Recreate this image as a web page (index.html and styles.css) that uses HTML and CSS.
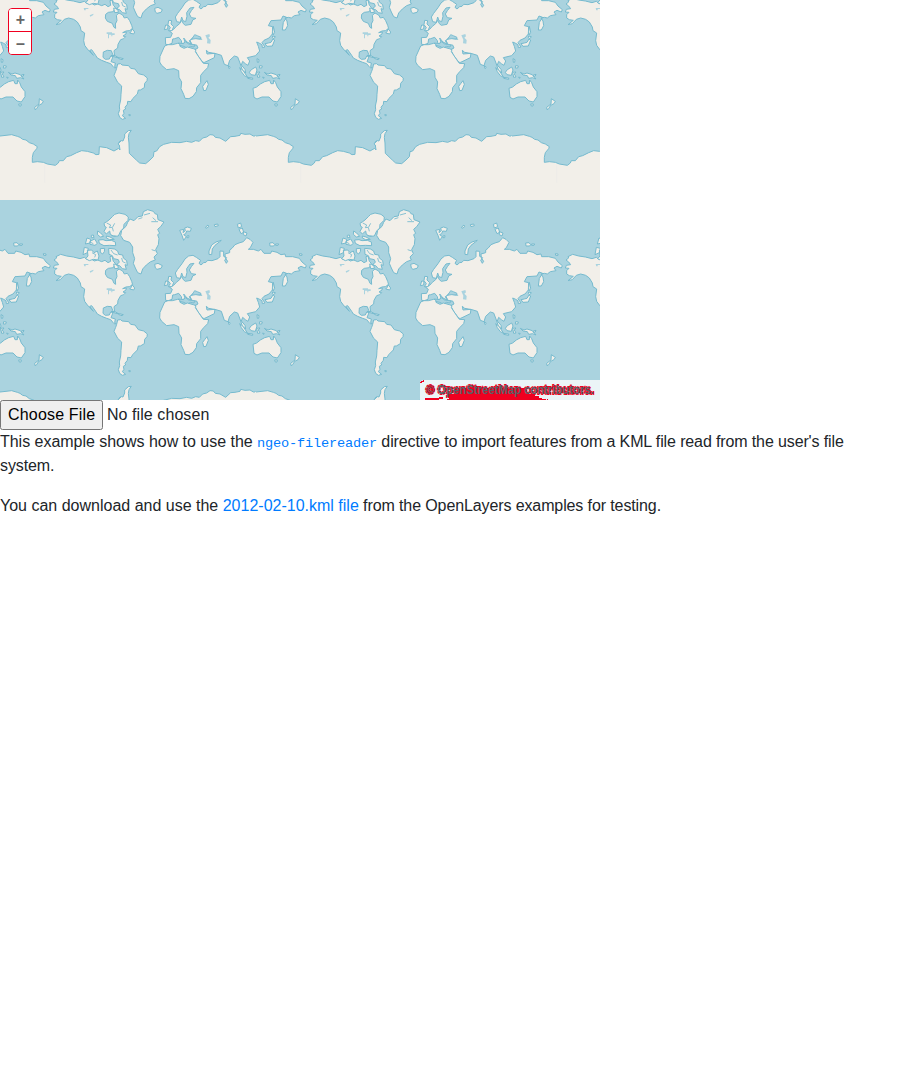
FILE: index.html
```html
<!DOCTYPE html>
<html lang="en">
<head>
<meta charset="utf-8">
<title>File reader example</title>
<link rel="stylesheet" href="styles.css">
</head>
<body>
<div class="map">
  <svg class="tiles" width="600" height="400" viewBox="0 0 600 400">
    <defs>
      <g id="world">
        <!-- Antarctica: ice without an outline, then its coast -->
        <path class="icefield" d="M-153 576L-132 574 -115 572 -98 577 -90 580 -82 586 -72 588 -62 596 -50 600 -38 608 -40 614 -50 626 -53 640 -53 655 -38 653 -20 655 -8 660 16 664 25 657 28 650 40 650 50 638 62 635 80 626 95 620 112 622 130 627 138 632 147 631 148 608 170 611 192 621 206 613 210 618 208 603 204 600 212 590 207 596 214 590 219 591 224 579 224 570 235 560 244 559 237 569 235 580 237 597 238 628 260 649 269 657 287 659 300 648 310 638 312 623 320 621 329 608 341 601 365 595 390 596 410 592 425 595 437 590 448 592 458 582 470 579 480 572 490 573 496 580 510 582 527 592 542 578 555 577 570 574 572 568 585 571 600 570 610 576 621 576V768H-153Z"/>
        <path class="coast" d="M-150 576L-132 574 -115 572 -98 577 -90 580 -82 586 -72 588 -62 596 -50 600 -38 608 -40 614 -50 626 -53 640 -53 655 -38 653 -20 655 -8 660 16 664 25 657 28 650 40 650 50 638 62 635 80 626 95 620 112 622 130 627 138 632 147 631 148 608 170 611 192 621 206 613 210 618 208 603 204 600 212 590 207 596 214 590 219 591 224 579 224 570 235 560 244 559 237 569 235 580 237 597 238 628 260 649 269 657 287 659 300 648 310 638 312 623 320 621 329 608 341 601 365 595 390 596 410 592 425 595 437 590 448 592 458 582 470 579 480 572 490 573 496 580 510 582 527 592 542 578 555 577 570 574 572 568 585 571 600 570 610 576 618 576"/>
        <path d="M-16 664V716" stroke="#e3e5e3" fill="none"/>
        <!-- North America -->
        <path class="land" d="M12 180L20 174 18 170 32 163 50 168 70 171 90 176 103 172 110 178 122 176 133 183 143 180 155 185 165 181 174 188 182 184 180 170 186 168 190 184 196 190 190 203 175 205 167 211 166 222 172 232 187 238 192 250 197 253 196 240 201 230 199 214 207 207 218 213 223 222 232 220 239 230 245 244 248 254 238 260 228 261 218 266 229 264 228 270 219 276 227 278 221 284 212 287 204 301 203 312 192 320 194 337 188 331 184 320 172 319 160 324 159 340 166 346 178 345 182 336 189 338 183 353 196 357 194 368 200 372 192 371 182 359 170 355 155 349 142 342 137 334 125 317 119 319 130 334 112 315 104 304 101 290 104 267 93 260 91 249 82 234 71 226 56 222 43 226 31 239 18 242 34 229 22 227 14 222 14 212 21 205 10 204 13 196 26 194 20 186Z"/>
        <!-- Arctic archipelago -->
        <path class="land" d="M112 151L125 150 132 158 142 153 147 168 144 180 130 178 118 182 107 176 114 168ZM103 142L115 145 112 158 99 164ZM111 114L122 118 120 129 106 132ZM124 106L130 105 132 113 124 113ZM143 93L152 99 161 109 151 111 142 103ZM120 124L134 117 142 130 135 136 120 133ZM146 120L159 119 168 122 184 121 196 126 197 137 178 136 162 137 148 130ZM162 70L170 65 177 60 187 50 194 43 207 39 225 43 235 51 234 61 222 73 221 84 212 93 205 108 191 109 181 103 179 93 169 102 162 94 169 82 164 79ZM169 108L180 111 193 118 179 119 169 114ZM151 146L164 145 163 155 158 162 151 157ZM176 145L193 147 203 153 206 163 218 165 220 174 230 182 232 196 225 194 229 208 217 206 209 197 198 195 208 187 205 179 191 176 187 167 177 163ZM191 192L203 194 205 205 194 206ZM246 254L254 264 251 270 239 267 243 263Z"/>
        <path class="water" d="M170 69L182 75 178 83 187 82 190 94M194 70L188 81M184 107L197 108M126 158L137 164 134 172M120 126L130 131M183 150L191 161 203 165M215 174L218 185 227 189"/>
        <!-- Greenland and Iceland -->
        <path class="land" d="M212 107L215 91 228 79 233 67 240 57 252 62 264 50 277 48 280 35 293 29 310 34 316 42 322 43 324 59 342 66 332 80 323 88 329 100 323 104 327 116 325 134 317 149 322 161 312 171 316 180 302 185 289 195 278 207 273 222 263 218 256 204 250 190 254 176 248 158 248 141 239 127 221 121ZM314 193L324 190 337 197 333 205 321 208 316 204Z"/>
        <path class="water" d="M265 57L277 53M282 45L300 40M308 53L318 62M304 65L324 65M305 149L317 153"/>
        <!-- Cuba and Hispaniola -->
        <path class="land" d="M183 334L195 335 207 342 195 339ZM208 341L220 344 216 347 207 344Z"/>
        <!-- South America -->
        <path class="land" d="M200 373L203 360 212 359 216 363 236 365 242 373 255 375 265 389 281 393 292 402 291 410 284 418 283 431 271 438 265 438 262 450 248 464 243 473 233 472 232 481 225 490 227 495 220 499 222 508 217 515 227 523 217 526 209 520 205 509 209 497 208 486 212 468 213 451 215 426 203 415 192 394 197 382Z"/>
        <path class="land" d="M236 512h5v3h-4z"/>
        <!-- Europe and Asia -->
        <path class="land" d="M347 301L346 281 362 280 367 268 359 262 371 256 379 247 389 239 395 229 400 239 406 244 423 241 428 228 438 223 424 221 418 210 424 200 432 190 420 192 410 206 411 217 407 233 399 230 395 219 391 235 380 233 376 219 383 208 396 191 405 177 416 168 429 166 439 172 452 181 447 190 453 195 461 188 468 187 473 181 486 182 504 176 510 170 510 153 521 154 521 169 530 173 524 181 529 190 533 184 526 174 525 162 539 158 539 150 546 145 555 134 567 129 580 125 590 113 600 118 609 127 601 143 595 148 610 148 625 153 633 148 642 160 662 160 665 153 681 157 693 164 705 162 707 170 728 170 748 175 756 186 769 197 766 204 753 199 744 204 750 212 733 215 724 222 715 220 705 222 711 231 713 245 706 258 697 258 700 235 710 220 699 216 693 228 663 230 655 245 668 248 667 270 657 282 642 289 636 296 645 309 637 311 636 302 629 298 620 294 625 307 629 321 617 335 600 339 592 341 599 351 594 364 586 359 578 352 574 363 585 376 587 387 577 378 570 357 563 339 553 336 539 349 534 365 523 361 514 334 498 329 476 325 469 319 471 330 495 328 493 341 464 355 459 355 444 336 434 317 444 312 440 303 427 302 420 290 429 280 442 284 455 286 448 279 433 277 425 286 418 290 423 300 411 294 401 282 405 295 396 300 394 290 386 280 374 284 368 285 366 298 355 302Z"/>
        <path class="water sea" d="M425 286L434 272 442 275 453 280 450 285 436 284ZM384 297L401 299 406 293 416 300 435 303 432 309 421 307 412 313 402 307 389 304Z"/>
        <!-- Africa and Madagascar -->
        <path class="land" d="M344 306L354 302 367 302 383 298 389 299 390 307 402 313 412 309 430 314 438 317 436 323 452 347 460 358 476 359 473 371 461 383 452 394 452 416 440 431 439 443 429 457 417 464 405 463 401 451 393 434 395 414 387 400 386 380 372 374 350 377 335 364 329 354 330 337ZM471 410L475 421 468 439 461 440 458 427 464 419Z"/>
        <!-- European and Arctic islands -->
        <path class="land" d="M356 229L365 230 363 240 371 248 366 260 355 260 361 251 354 242ZM347 243L354 244 353 255 343 257ZM389 91L401 88 399 98 406 92 404 84 413 81 424 85 421 94 410 93 407 101 401 104 409 110 401 121 396 106ZM411 108L417 107 416 113 411 113ZM466 82L474 75 476 80 468 85ZM493 74L503 72 505 77 495 80ZM514 121L508 126 495 136 487 147 485 164 477 163 477 153 485 135 498 126ZM562 73L572 69 575 80 565 84ZM567 88L577 84 581 97 573 101ZM580 95L591 99 588 108 580 104ZM659 129L669 128 674 134 671 138 660 138ZM677 132L686 132 684 136 677 136ZM748 161L756 162 756 166 749 166ZM670 247L674 265 669 273 668 262ZM668 276L676 278 672 284 667 281ZM669 285L674 288 667 306 651 307 645 299 655 297 663 295Z"/>
        <!-- South-east Asia and Oceania -->
        <path class="land" d="M569 371L579 379 593 400 583 395 574 383ZM592 400L608 402 608 406 593 403ZM604 377L617 369 621 378 616 394 603 392 598 385ZM621 344L627 347 626 355 622 355ZM629 365L637 366 635 372 628 372ZM620 385L630 384 625 390 630 399 623 400ZM643 385L654 390 663 387 679 392 690 405 680 401 668 403 664 395 651 393ZM682 393L690 391 688 396 682 397ZM638 399L643 401 640 403ZM535 365L541 370 537 374ZM609 433L620 429 631 420 644 413 659 409 663 419 670 419 671 408 677 416 682 429 693 443 693 458 682 474 669 471 657 459 636 459 621 465 612 460ZM674 480L682 480 681 486 676 486ZM736 464L748 472 744 479 734 484 728 494 723 497 722 490 735 480Z"/>
        <!-- Inland seas and lakes -->
        <path class="lake" d="M466 274L478 270 480 277 475 281 482 288 481 299 471 298 472 287ZM170 265h16v3h8v5h-7v4h-3v-5h-7v11h-3v-13h-4zM101 192h14v3h-8v4h-4zM119 214l11-5v4l-9 5z"/>
      </g>
      <g id="row">
        <use href="#world" x="-768"/><use href="#world"/><use href="#world" x="768"/>
      </g>
    </defs>
    <g transform="translate(50 200) scale(.333333)">
      <use href="#row" y="-768"/>
      <use href="#row"/>
      <use href="#world" x="1536" y="-768"/>
      <use href="#world" x="1536"/>
    </g>
  </svg>
  <div class="zoom">
    <button class="zoom-in" aria-label="Zoom in">+</button>
    <button class="zoom-out" aria-label="Zoom out">–</button>
  </div>
  <div class="attribution">
    <svg width="180" height="20" viewBox="0 0 180 20">
      <path class="mark" d="M0 2h1v-1h2v-1h1v2h-2v1h-2zM5 18h14v-1h4v2h-4v1h-14zM27 14h8v-6h70v6h10v2h4v2h3v1h4v1h-99v-1h2v-2h-3zM127 19h1v1h-1z"/>
      <text class="credit" x="6" y="14" textLength="168" lengthAdjust="spacingAndGlyphs">© OpenStreetMap contributors.</text>
    </svg>
  </div>
</div>
<input class="file" type="file">
<p><span class="lead">This example shows how to use the </span><a href="#"><code>ngeo-filereader</code></a><span class="tight"> directive to import features from a KML file read from the user's file system.</span></p>
<p>You can download and use the <a href="#">2012-02-10.kml file</a><span class="snug"> from the OpenLayers examples for testing.</span></p>
</body>
</html>
```
FILE: styles.css
```css
body {
  margin: 0;
  background: #fff;
  color: #212529;
  font: 16px/24px "Liberation Sans", Arial, sans-serif;
}

.map {
  position: relative;
  width: 600px;
  height: 400px;
  overflow: hidden;
  background: #aad3df;
}

.tiles {
  display: block;
}

.land,
.coast {
  fill: #f2efe9;
  stroke: #75bace;
  stroke-width: 3;
  stroke-linejoin: round;
}

.coast {
  fill: none;
}

.icefield {
  fill: #f2efe9;
}

.water {
  fill: none;
  stroke: #75bace;
  stroke-width: 2.6;
}

.sea,
.lake {
  fill: #aad3df;
}

.zoom {
  position: absolute;
  left: 8px;
  top: 8px;
  box-sizing: border-box;
  display: flex;
  flex-direction: column;
  width: 24px;
  height: 47px;
  border: 1px solid #f00020;
  border-radius: 4px;
  overflow: hidden;
  background: #fff;
}

.zoom button {
  display: block;
  width: 22px;
  height: 22px;
  margin: 0;
  padding: 0 0 0 1px;
  border: 0;
  background: #fff;
  color: #666;
  font: bold 16px/22px "Liberation Sans", Arial, sans-serif;
}

.zoom .zoom-out {
  height: 24px;
  padding-top: 1px;
  border-top: 1px solid #f00020;
}

.attribution {
  position: absolute;
  right: 0;
  bottom: 0;
  width: 180px;
  height: 20px;
  border-radius: 4px 0 0;
  background: #ebf4f7;
}

.attribution svg {
  display: block;
}

.mark {
  fill: #f00020;
  shape-rendering: crispEdges;
}

.credit {
  fill: #596068;
  stroke: #f00020;
  stroke-width: 2.2px;
  stroke-dasharray: 2.5 .7;
  paint-order: stroke;
  font: bold 12px "Liberation Sans", Arial, sans-serif;
}

.file {
  display: block;
  height: 30px;
  margin: 0;
  color: #212529;
  font: inherit;
  letter-spacing: .07px;
}

.file::file-selector-button {
  box-sizing: border-box;
  width: 103px;
  height: 30px;
  margin: 0 4px 0 0;
  padding: 1px 6px;
  font: inherit;
  letter-spacing: .18px;
}

p {
  margin: 0 0 16px;
}

a {
  color: #007bff;
  text-decoration: none;
}

code {
  font: 13.6px "Liberation Mono", monospace;
  letter-spacing: -.16px;
}

.lead {
  letter-spacing: -.025px;
}

.tight {
  letter-spacing: -.125px;
}

.snug {
  letter-spacing: -.11px;
}
```
